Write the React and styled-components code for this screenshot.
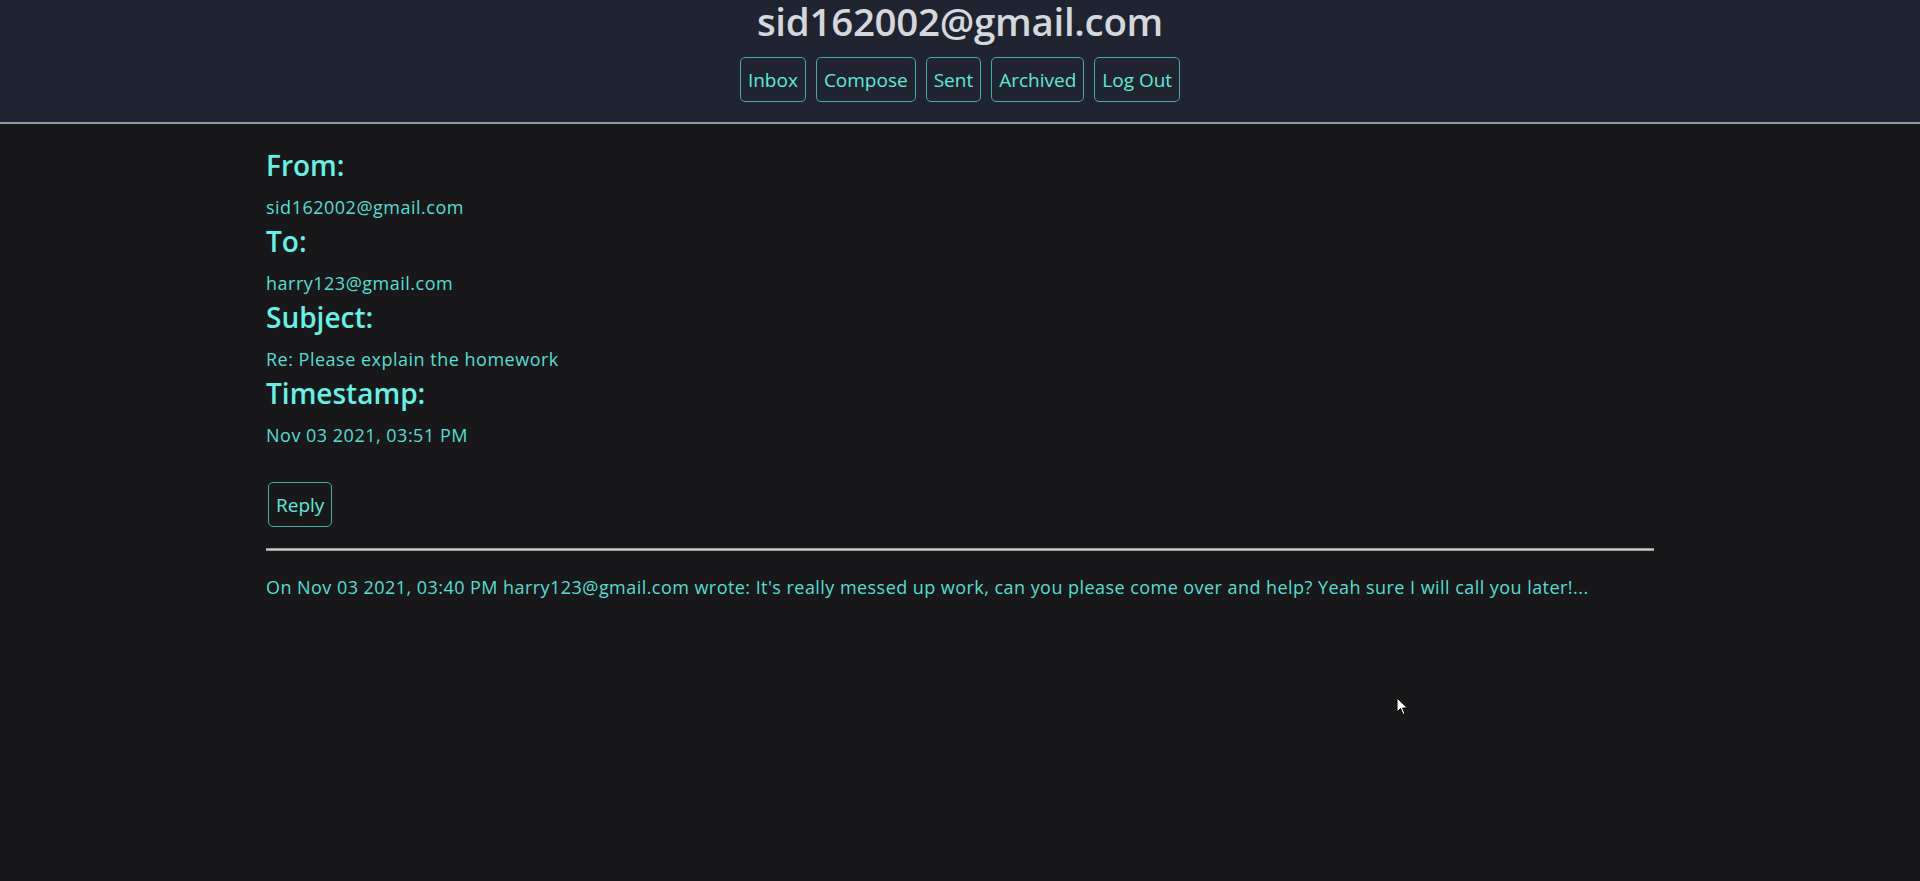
import React from "react";
import styled, { createGlobalStyle } from "styled-components";

const Global = createGlobalStyle`
  html, body { margin: 0; padding: 0; background: #18181b; }
  body { font-family: "Open Sans", "Noto Sans", sans-serif; min-height: 881px; }
`;

const Header = styled.header`
  background: #1f2430;
  border-bottom: 2px solid #8b9aa3;
  display: flex;
  flex-direction: column;
  align-items: center;
  padding: 0 0 20px;
`;

const Title = styled.h1`
  margin: 0;
  font-size: 38.5px;
  line-height: 42px;
  font-weight: 600;
  color: #d4d7dc;
  letter-spacing: -0.3px;
`;

const Nav = styled.nav`
  display: flex;
  gap: 10px;
  margin-top: 15px;
`;

const Button = styled.button`
  font-family: "Open Sans", "Noto Sans", sans-serif;
  font-size: 19px;
  color: #5fe9d9;
  background: transparent;
  border: 1.5px solid #40afa3;
  border-radius: 5px;
  height: 45px;
  padding: 0 7px;
  cursor: pointer;
`;

const Main = styled.main`
  width: 1388px;
  margin: 0 auto;
  padding-top: 24px;
`;

const Label = styled.h3`
  margin: 0 0 12px;
  font-size: 28px;
  line-height: 34px;
  font-weight: 600;
  color: #64f2e6;
`;

const Value = styled.p`
  margin: 0 0 3px;
  font-size: 18px;
  line-height: 27px;
  color: #54dfd2;
  letter-spacing: 0.5px;
`;

const ReplyWrap = styled.div`
  margin: 33px 0 0 2px;
`;

const Rule = styled.hr`
  margin: 21px 0 0;
  border: none;
  height: 3px;
  background: linear-gradient(#8a8a8a, #c9c9c9 50%, #8a8a8a);
`;

const Quote = styled.p`
  margin: 23px 0 0;
  font-size: 18px;
  line-height: 27px;
  color: #54dfd2;
  letter-spacing: 0.45px;
`;

const Cursor = styled.svg`
  position: absolute;
  left: 1396px;
  top: 697px;
  width: 14px;
  height: 20px;
`;

const fields = [
  ["From:", "sid162002@gmail.com"],
  ["To:", "harry123@gmail.com"],
  ["Subject:", "Re: Please explain the homework"],
  ["Timestamp:", "Nov 03 2021, 03:51 PM"],
];

export default function App() {
  return (
    <>
      <Global />
      <Header>
        <Title>sid162002@gmail.com</Title>
        <Nav>
          {["Inbox", "Compose", "Sent", "Archived", "Log Out"].map((b) => (
            <Button key={b}>{b}</Button>
          ))}
        </Nav>
      </Header>
      <Main>
        {fields.map(([l, v]) => (
          <React.Fragment key={l}>
            <Label>{l}</Label>
            <Value>{v}</Value>
          </React.Fragment>
        ))}
        <ReplyWrap>
          <Button>Reply</Button>
        </ReplyWrap>
        <Rule />
        <Quote>
          On Nov 03 2021, 03:40 PM harry123@gmail.com wrote: It's really messed up work, can you please come over and help? Yeah sure I will call you later!...
        </Quote>
      </Main>
      <Cursor viewBox="0 0 14 20">
        <path d="M1 1 L1 15 L4.5 11.5 L7 17.5 L9 16.6 L6.6 11 L11.5 11 Z" fill="#fff" stroke="#000" strokeWidth="1" />
      </Cursor>
    </>
  );
}
